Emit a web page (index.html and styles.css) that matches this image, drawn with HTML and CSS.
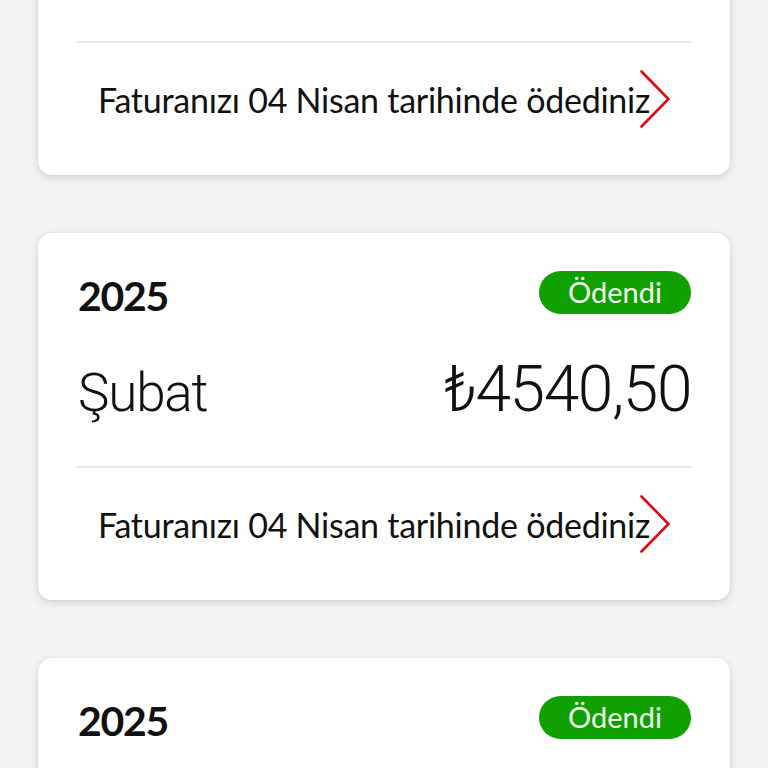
FILE: index.html
```html
<!DOCTYPE html>
<html lang="tr">
<head>
<meta charset="utf-8">
<title>Faturalar</title>
<link rel="stylesheet" href="styles.css">
</head>
<body>
<main class="list">
  <section class="card">
    <div class="card-head">
      <span class="year">2025</span>
      <span class="badge">Ödendi</span>
    </div>
    <div class="card-body">
      <span class="month">Mart</span>
      <span class="amount">₺4540,50</span>
    </div>
    <div class="divider"></div>
    <div class="card-foot">
      <span class="foot-text">Faturanızı 04 Nisan tarihinde ödediniz</span>
      <svg class="chevron" viewBox="0 0 30 58" width="30" height="58" aria-hidden="true"><polyline points="1.5,1.5 28.5,29 1.5,56.5"/></svg>
    </div>
  </section>

  <section class="card">
    <div class="card-head">
      <span class="year">2025</span>
      <span class="badge">Ödendi</span>
    </div>
    <div class="card-body">
      <span class="month">Şubat</span>
      <span class="amount">₺4540,50</span>
    </div>
    <div class="divider"></div>
    <div class="card-foot">
      <span class="foot-text">Faturanızı 04 Nisan tarihinde ödediniz</span>
      <svg class="chevron" viewBox="0 0 30 58" width="30" height="58" aria-hidden="true"><polyline points="1.5,1.5 28.5,29 1.5,56.5"/></svg>
    </div>
  </section>

  <section class="card">
    <div class="card-head">
      <span class="year">2025</span>
      <span class="badge">Ödendi</span>
    </div>
    <div class="card-body">
      <span class="month">Ocak</span>
      <span class="amount">₺4540,50</span>
    </div>
    <div class="divider"></div>
    <div class="card-foot">
      <span class="foot-text">Faturanızı 04 Nisan tarihinde ödediniz</span>
      <svg class="chevron" viewBox="0 0 30 58" width="30" height="58" aria-hidden="true"><polyline points="1.5,1.5 28.5,29 1.5,56.5"/></svg>
    </div>
  </section>
</main>
</body>
</html>
```
FILE: styles.css
```css
html, body {
  margin: 0;
  padding: 0;
  background: #f3f3f3;
}
body {
  font-family: "Lato", "Open Sans", "Liberation Sans", sans-serif;
  color: #111;
  overflow: hidden;
  height: 768px;
}
.list {
  display: flex;
  flex-direction: column;
  gap: 58px;
  padding: 0 38px;
  margin-top: -192px;
}
.card {
  background: #fff;
  border-radius: 14px;
  box-shadow: 0 3px 8px rgba(0, 0, 0, 0.13), 0 0 3px rgba(0, 0, 0, 0.06);
  padding: 38px 39px 0 39px;
  display: flex;
  flex-direction: column;
}
.card-head {
  display: flex;
  justify-content: space-between;
  align-items: flex-start;
  height: 43px;
}
.year {
  font-family: "Lato", sans-serif;
  font-weight: 700;
  font-size: 41px;
  line-height: 37px;
  margin-top: 6px;
  margin-left: 1px;
  letter-spacing: -1.3px;
  color: #111;
}
.badge {
  background: #10a000;
  color: #f4fff2;
  border-radius: 22px;
  height: 43px;
  box-sizing: border-box;
  padding: 0 29px 2px 29px;
  line-height: 41px;
  font-family: "Lato", sans-serif;
  font-size: 29px;
  font-weight: 400;
}
.card-body {
  display: flex;
  justify-content: space-between;
  align-items: baseline;
  margin-top: 43px;
}
.month {
  font-family: "Roboto", sans-serif;
  font-weight: 300;
  font-size: 53px;
  line-height: 65px;
  letter-spacing: -1.2px;
  margin-left: 1px;
}
.amount {
  font-family: "Roboto", "DejaVu Sans", sans-serif;
  font-weight: 300;
  font-size: 64px;
  line-height: 65px;
  letter-spacing: -1.4px;
  margin-right: 0;
}
.divider {
  height: 2px;
  background: #e9e9e9;
  margin: 40px -1px 0 -1px;
}
.card-foot {
  display: flex;
  justify-content: center;
  align-items: center;
  padding: 27px 0 47px;
}
.foot-text {
  font-family: "Lato", sans-serif;
  font-size: 34px;
  font-weight: 400;
  letter-spacing: -0.25px;
  color: #111;
  white-space: nowrap;
}
.chevron {
  display: block;
  margin-left: -10px;
  flex: none;
}
.chevron polyline {
  fill: none;
  stroke: #e30613;
  stroke-width: 2.6;
  stroke-linecap: round;
  stroke-linejoin: miter;
}
```
